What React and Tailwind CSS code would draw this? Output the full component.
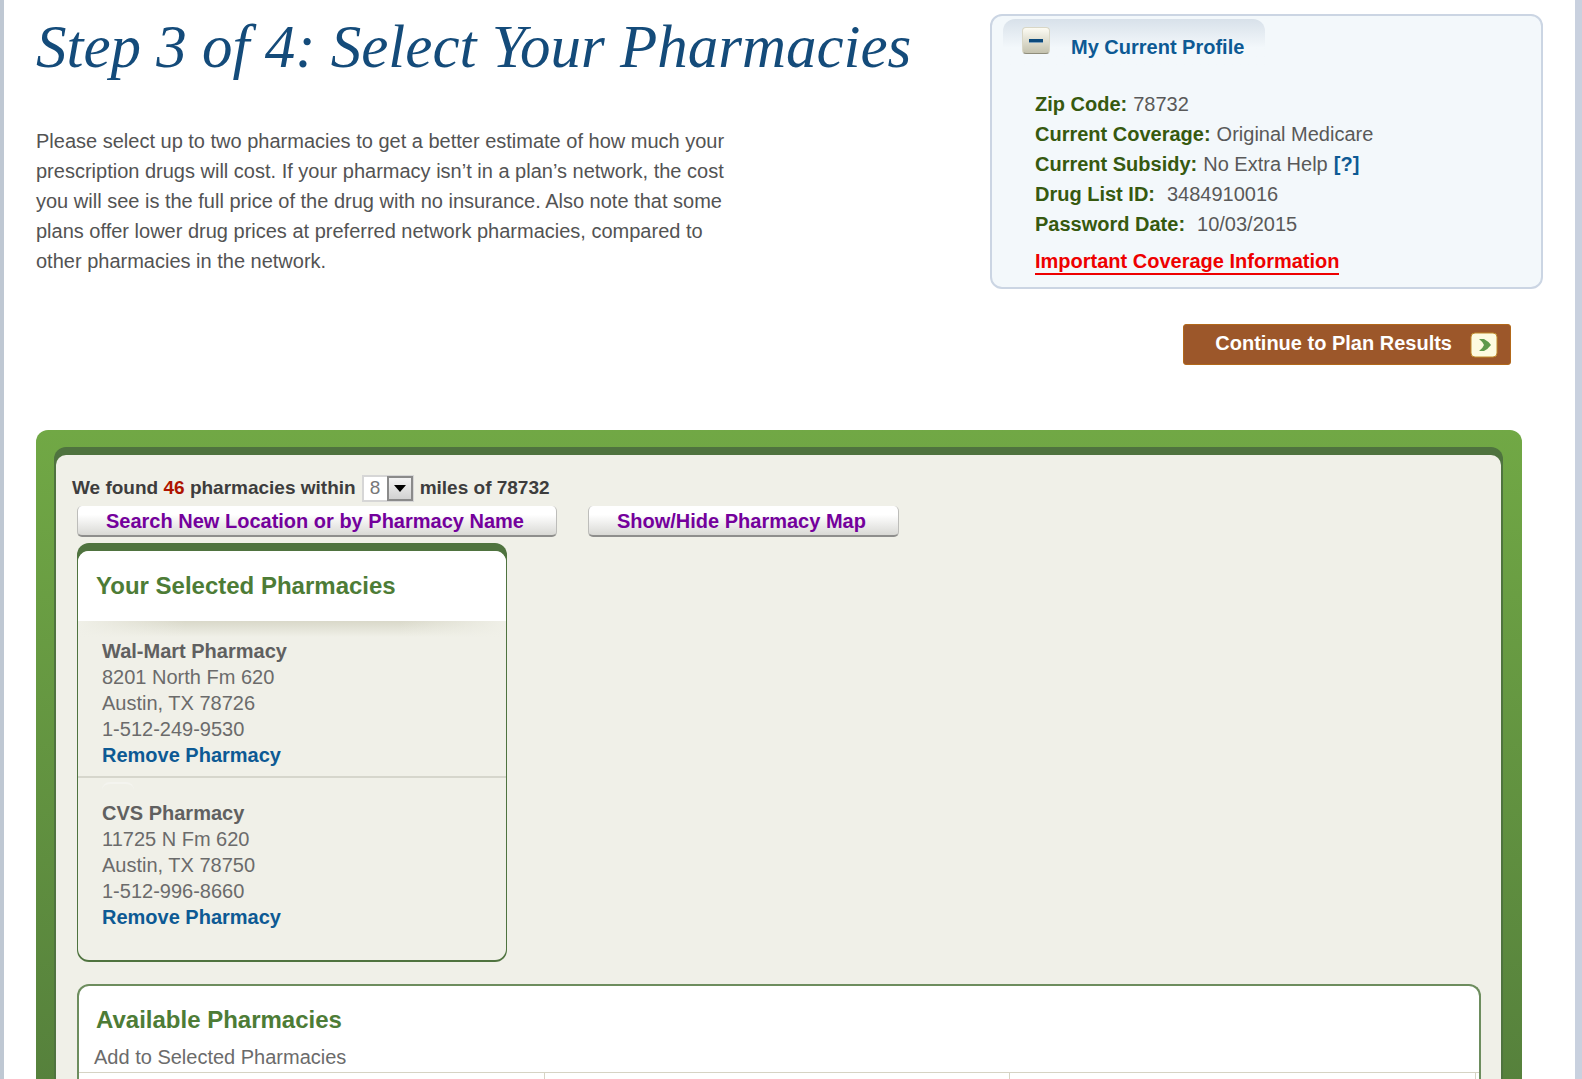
import { useState } from 'react';

const profile = [
  { label: 'Zip Code:', value: '78732' },
  { label: 'Current Coverage:', value: 'Original Medicare' },
  { label: 'Current Subsidy:', value: 'No Extra Help', help: true },
  { label: 'Drug List ID:', value: '3484910016', wide: true },
  { label: 'Password Date:', value: '10/03/2015', wide: true },
];

const initialPharmacies = [
  { id: 1, name: 'Wal-Mart Pharmacy', street: '8201 North Fm 620', city: 'Austin, TX 78726', phone: '1-512-249-9530' },
  { id: 2, name: 'CVS Pharmacy', street: '11725 N Fm 620', city: 'Austin, TX 78750', phone: '1-512-996-8660' },
];

function ProfileCard() {
  const [open, setOpen] = useState(true);

  return (
    <aside className="w-[553px] shrink-0 rounded-xl border-2 border-[#cbd5e3] bg-[#f3f8fb] pt-[3px] pl-[11px] pb-3">
      <div className="flex h-12 w-[262px] items-start rounded-t-xl bg-linear-to-b from-[#d8e1ea] to-[#f3f8fb] to-60% pt-2 pl-[19px]">
        <button type="button" onClick={() => setOpen(!open)} aria-label="Toggle profile"
          className="flex h-[27px] w-7 items-center justify-center rounded border border-[#d9d7c6] border-b-[#8f8d7b] bg-linear-to-b from-[#fdfcf4] to-[#c4c2ae]">
          <span className="h-1 w-3.5 border-b border-[#7d9fba] bg-[#0c4a7c]" />
        </button>
        <h2 className="ml-[21px] pt-[5px] text-[20px] leading-[30px] font-bold text-[#0d5a94]">My Current Profile</h2>
      </div>
      {open && (
        <div className="pt-[22px] pl-8 text-[20px] leading-[30px] text-[#595959]">
          <dl>
            {profile.map((p) => (
              <div key={p.label} className="flex gap-1.5">
                <dt className="font-bold text-[#36590f]">{p.label}</dt>
                <dd className={p.wide ? 'pl-1.5' : ''}>
                  {p.value}
                  {p.help && <a href="#subsidy" className="ml-1.5 font-bold text-[#0d5a94]">[?]</a>}
                </dd>
              </div>
            ))}
          </dl>
          <a href="#coverage" className="mt-2.5 block w-fit border-b-2 border-[#ee0000] leading-[24px] font-bold text-[#ee0000]">Important Coverage Information</a>
        </div>
      )}
    </aside>
  );
}

function SilverButton({ children }) {
  return (
    <button type="button"
      className="h-[31px] rounded-[5px] border-x border-b-2 border-[#bdbdba] border-b-[#8e8e8c] bg-linear-to-b from-white from-30% to-[#d9d9d5] pr-8 pl-7 text-[20px] leading-[26px] font-bold text-[#74009c]">
      {children}
    </button>
  );
}

function SelectedPharmacies() {
  const [list, setList] = useState(initialPharmacies);

  return (
    <section className="mt-1.5 ml-[5px] w-[430px] rounded-xl bg-[#4f733f] px-px pt-2 pb-[2px]">
      <div className="overflow-hidden rounded-[11px] bg-[#f0f0e8] pb-[30px]">
        <h3 className="bg-white pt-5 pb-5 pl-[18px] text-[24px] leading-[30px] font-bold text-[#4d7c36]">Your Selected Pharmacies</h3>
        <div className="h-4 bg-linear-to-b from-[#d9d8c9] to-[#f0f0e8]">
          <div className="h-full bg-[linear-gradient(to_right,#f0f0e8,transparent_25%,transparent_75%,#f0f0e8)]" />
        </div>
        <ul>
          {list.map((p, i) => (
            <li key={p.id} className={i > 0 ? 'border-t-2 border-[#d6d6cc] pt-1 pl-6' : 'pt-px pb-2 pl-6'}>
              {i > 0 && <div className="mb-2.5 h-2 w-8 rounded-t-lg border-t-2 border-[#f4f4ef]" />}
              <address className="text-[20px] leading-[26px] text-[#6b6b6b] not-italic">
                <strong className="block text-[#606060]">{p.name}</strong>
                <span className="block">{p.street}</span>
                <span className="block">{p.city}</span>
                <span className="block">{p.phone}</span>
              </address>
              <button type="button" onClick={() => setList(list.filter((x) => x.id !== p.id))}
                className="block text-[20px] leading-[26px] font-bold text-[#0d5a94]">
                Remove Pharmacy
              </button>
            </li>
          ))}
        </ul>
      </div>
    </section>
  );
}

function AvailablePharmacies() {
  return (
    <section className="mt-[22px] mr-5 ml-[5px] flex-1 rounded-t-xl border-2 border-b-0 border-[#6d8d5e] bg-white">
      <h3 className="pt-[19px] pl-[17px] text-[24px] leading-[30px] font-bold text-[#4d7c36]">Available Pharmacies</h3>
      <table className="w-full table-fixed border-collapse">
        <caption className="pt-2 pl-[15px] text-left text-[20px] leading-[29px] text-[#6b6b6b]">Add to Selected Pharmacies</caption>
        <tbody>
          <tr className="border-t border-[#d6d3c4]">
            <td className="h-2 border-r border-[#d6d3c4]" />
            <td className="border-r border-[#d6d3c4]" />
            <td className="border-r border-[#d6d3c4]" />
            <td className="w-1" />
          </tr>
        </tbody>
      </table>
    </section>
  );
}

export default function App() {
  const [miles, setMiles] = useState('8');

  return (
    <div className="flex h-screen flex-col overflow-hidden border-r-[7px] border-l-4 border-r-[#c9d1df] border-l-[#bfc8d3] bg-white pl-8 font-['Liberation_Sans',Arial,sans-serif]">
      <header className="flex items-start justify-between pr-8">
        <div>
          <h1 className="pt-3.5 font-[Georgia,'Liberation_Serif',serif] text-[61px] leading-[66px] whitespace-nowrap text-[#144b7a] italic">
            Step 3 of 4: Select Your Pharmacies
          </h1>
          <p className="mt-[46px] w-[700px] text-[20px] leading-[30px] text-[#535353]">
            Please select up to two pharmacies to get a better estimate of how much your prescription drugs will cost. If your pharmacy isn’t in a plan’s network, the cost you will see is the full price of the drug with no insurance. Also note that some plans offer lower drug prices at preferred network pharmacies, compared to other pharmacies in the network.
          </p>
        </div>
        <div className="pt-3.5">
          <ProfileCard />
        </div>
      </header>

      <div className="flex justify-end pt-[35px] pr-16">
        <button type="button" className="flex h-[41px] items-center gap-[18px] rounded-[3px] border border-[#b2681a] bg-[#9c572a] pr-3 pl-[31px] text-[20px] font-bold text-white">
          <span className="pb-1">Continue to Plan Results</span>
          <svg width="28" height="26" viewBox="0 0 28 26" aria-hidden="true">
            <rect x="1" y="1" width="26" height="24" rx="4" fill="#fdfbe0" stroke="#c08a2a" />
            <path d="M9 7h5q4 2 7 6-3 4-7 6H9q4-3 5-6-1-3-5-6z" fill="#5f9a4c" />
          </svg>
        </button>
      </div>

      <main className="mt-[65px] mr-[53px] flex flex-1 flex-col rounded-t-xl bg-linear-to-b from-[#71a845] to-[#56813c] pt-[17px] pr-[19px] pl-[18px]">
        <div className="flex flex-1 flex-col rounded-t-xl bg-[#4f733f] px-[2px] pt-2">
          <div className="flex flex-1 flex-col rounded-t-[10px] bg-[#f0f0e8] pt-[19px] pl-4">
            <div className="flex h-7 items-center text-[19px] font-bold text-[#3d3d3d]">
              <label htmlFor="miles">
                We found <span className="text-[#ae1400]">46</span> pharmacies within
              </label>
              <div className="relative mx-1.5">
                <select id="miles" value={miles} onChange={(e) => setMiles(e.target.value)}
                  className="block h-[27px] w-[52px] appearance-none border-2 border-[#d6d6d6] bg-white pl-1.5 text-[19px] leading-[22px] font-normal text-[#777777]">
                  <option>8</option>
                  <option>9</option>
                </select>
                <span className="pointer-events-none absolute inset-y-px right-px flex w-[26px] items-center justify-center border-2 border-[#8a8a8a] bg-linear-to-b from-[#f3f3f3] to-[#d2d2d2]">
                  <svg width="12" height="7" viewBox="0 0 12 7" aria-hidden="true">
                    <path d="M0 0h12L6 7z" fill="#000" />
                  </svg>
                </span>
              </div>
              <span>miles of 78732</span>
            </div>
            <div className="mt-1 ml-[5px] flex gap-[31px]">
              <SilverButton>Search New Location or by Pharmacy Name</SilverButton>
              <SilverButton>Show/Hide Pharmacy Map</SilverButton>
            </div>
            <SelectedPharmacies />
            <AvailablePharmacies />
          </div>
        </div>
      </main>
    </div>
  );
}
